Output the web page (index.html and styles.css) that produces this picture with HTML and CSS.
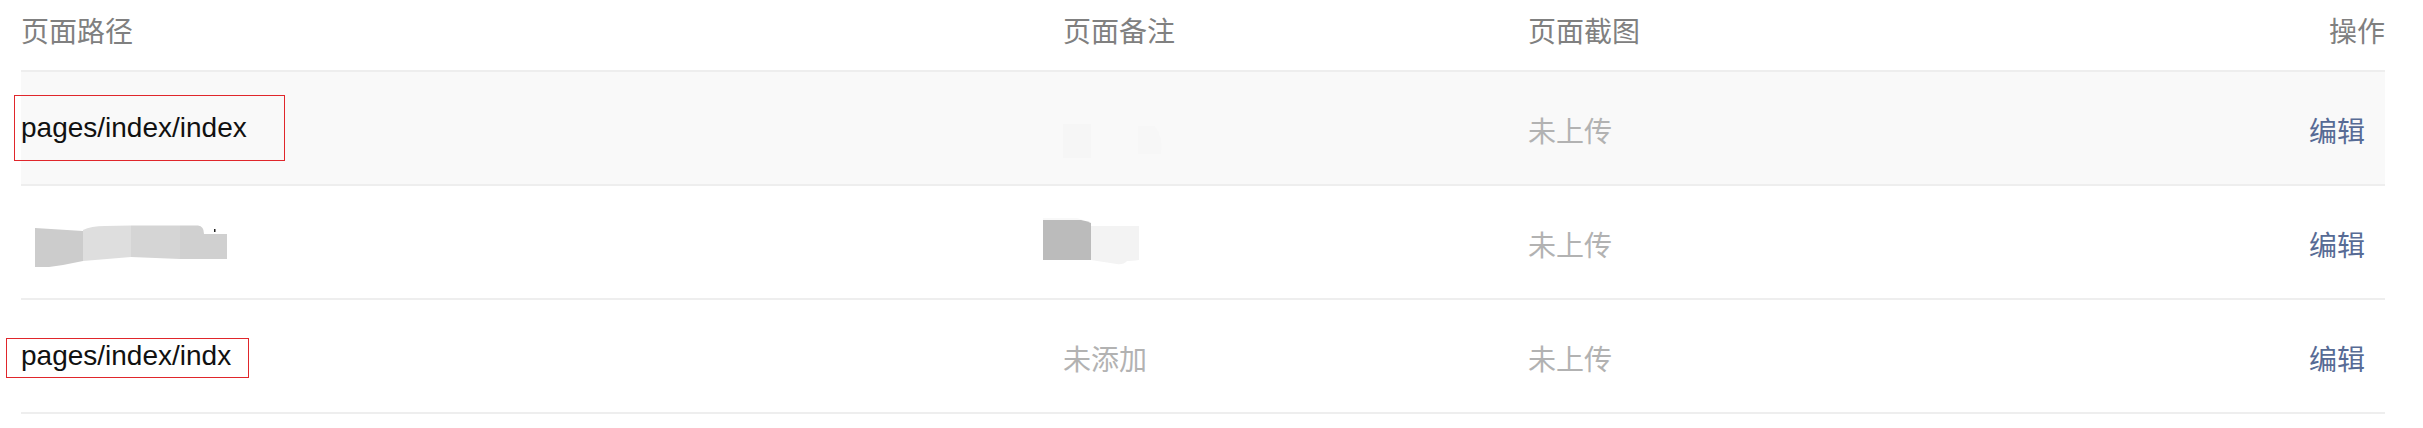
FILE: index.html
```html
<!DOCTYPE html>
<html lang="zh-CN">
<head>
    <meta charset="UTF-8">
    <meta name="viewport" content="width=device-width, initial-scale=1.0">
    <title>页面列表</title>
    <link rel="stylesheet" href="styles.css">
</head>
<body>

    <!-- Page list -->
    <div class="page-list">
        <table class="pages">
            <colgroup>
                <col class="col-path">
                <col class="col-note">
                <col class="col-shot">
                <col class="col-op">
            </colgroup>
            <thead>
                <tr>
                    <th>页面路径</th>
                    <th>页面备注</th>
                    <th>页面截图</th>
                    <th class="op">操作</th>
                </tr>
            </thead>
            <tbody>
                <tr class="hover">
                    <td class="path">
                        pages/index/index
                        <span class="mark mark-1"></span>
                    </td>
                    <td>
                        <svg class="blur blur-faint" width="120" height="34" viewBox="0 0 120 34">
                            <rect x="0" y="0" width="48" height="34" fill="#f6f6f6"/>
                            <path d="M95 2 H112 Q120 12 118 30 H95 Z" fill="#f7f7f7"/>
                        </svg>
                    </td>
                    <td class="muted">未上传</td>
                    <td class="op"><a href="javascript:void(0);">编辑</a></td>
                </tr>
                <tr>
                    <td class="path">
                        <svg class="blur blur-path" width="192" height="44" viewBox="0 0 192 44">
                            <path d="M0 5 L48 8 L48 38 Q30 42 14 44 L0 44 Z" fill="#cccccc"/>
                            <path d="M48 7 Q56 3 70 3 L96 2.5 L96 34 L48 38 Z" fill="#dedede"/>
                            <path d="M96 2.5 L145 2.5 L145 36 L96 34 Z" fill="#d5d5d5"/>
                            <path d="M145 2.5 L163 2.5 Q169 3 169 11 L192 11 L192 36 L145 36 Z" fill="#d0d0d0"/>
                            <rect x="179" y="6" width="1.5" height="3" fill="#222"/>
                        </svg>
                    </td>
                    <td>
                        <svg class="blur blur-note" width="96" height="48" viewBox="0 0 96 48">
                            <path d="M0 0 L34 0 L40 2 L0 2 Z" fill="#f8f8f8"/>
                            <path d="M0 2 L38 2 Q44 3 48 5 L48 42 L0 42 Z" fill="#bbbbbb"/>
                            <path d="M48 8 L96 8 L96 42 Q88 43 84 43 Q80 47 74 46 L48 42 Z" fill="#f3f3f3"/>
                        </svg>
                    </td>
                    <td class="muted">未上传</td>
                    <td class="op"><a href="javascript:void(0);">编辑</a></td>
                </tr>
                <tr>
                    <td class="path">
                        pages/index/indx
                        <span class="mark mark-3"></span>
                    </td>
                    <td class="muted">未添加</td>
                    <td class="muted">未上传</td>
                    <td class="op"><a href="javascript:void(0);">编辑</a></td>
                </tr>
            </tbody>
        </table>
    </div>

</body>
</html>
```

FILE: styles.css
```css
* {
    margin: 0;
    padding: 0;
    box-sizing: border-box;
}

body {
    font-family: "Liberation Sans", "Noto Sans CJK SC", sans-serif;
    background-color: #ffffff;
    color: #111111;
}

/* Table wrapper */
.page-list {
    padding: 0 38px 0 21px;
}

.pages {
    width: 100%;
    table-layout: fixed;
    border-collapse: separate;
    border-spacing: 0;
    font-size: 28px;
}

.col-path {
    width: 1042px;
}

.col-note {
    width: 465px;
}

.col-op {
    width: 300px;
}

/* Header */
.pages th {
    height: 70px;
    padding: 0 0 10px 0;
    font-weight: normal;
    text-align: left;
    color: #808080;
    vertical-align: middle;
}

.pages th.op {
    text-align: right;
}

/* Rows */
.pages td {
    height: 114px;
    padding: 0;
    border-top: 2px solid #eeeeee;
    vertical-align: middle;
    white-space: nowrap;
}

.pages tbody tr:last-child td {
    height: 116px;
    border-bottom: 2px solid #eeeeee;
}

.pages tr.hover td {
    background-color: #f9f9f9;
}

.pages td.path {
    position: relative;
    color: #111111;
}

.pages td.muted {
    color: #b2b2b2;
    padding-top: 4px;
}

.pages td.op {
    text-align: right;
    padding: 4px 20px 0 0;
}

.pages td.op a {
    color: #576b95;
    text-decoration: none;
}

/* Redacted blocks */
.blur {
    display: block;
}

.blur-path {
    margin: 6px 0 0 14px;
}

.blur-note {
    margin: 0 0 0 -20px;
}

.blur-faint {
    margin: 26px 0 0 -20px;
}

/* Red review marks over the path text */
.mark {
    position: absolute;
    border: 1px solid #e0262b;
    pointer-events: none;
}

.mark-1 {
    left: -7px;
    top: 23px;
    width: 271px;
    height: 66px;
}

.mark-3 {
    left: -15px;
    top: 38px;
    width: 243px;
    height: 40px;
}
```
